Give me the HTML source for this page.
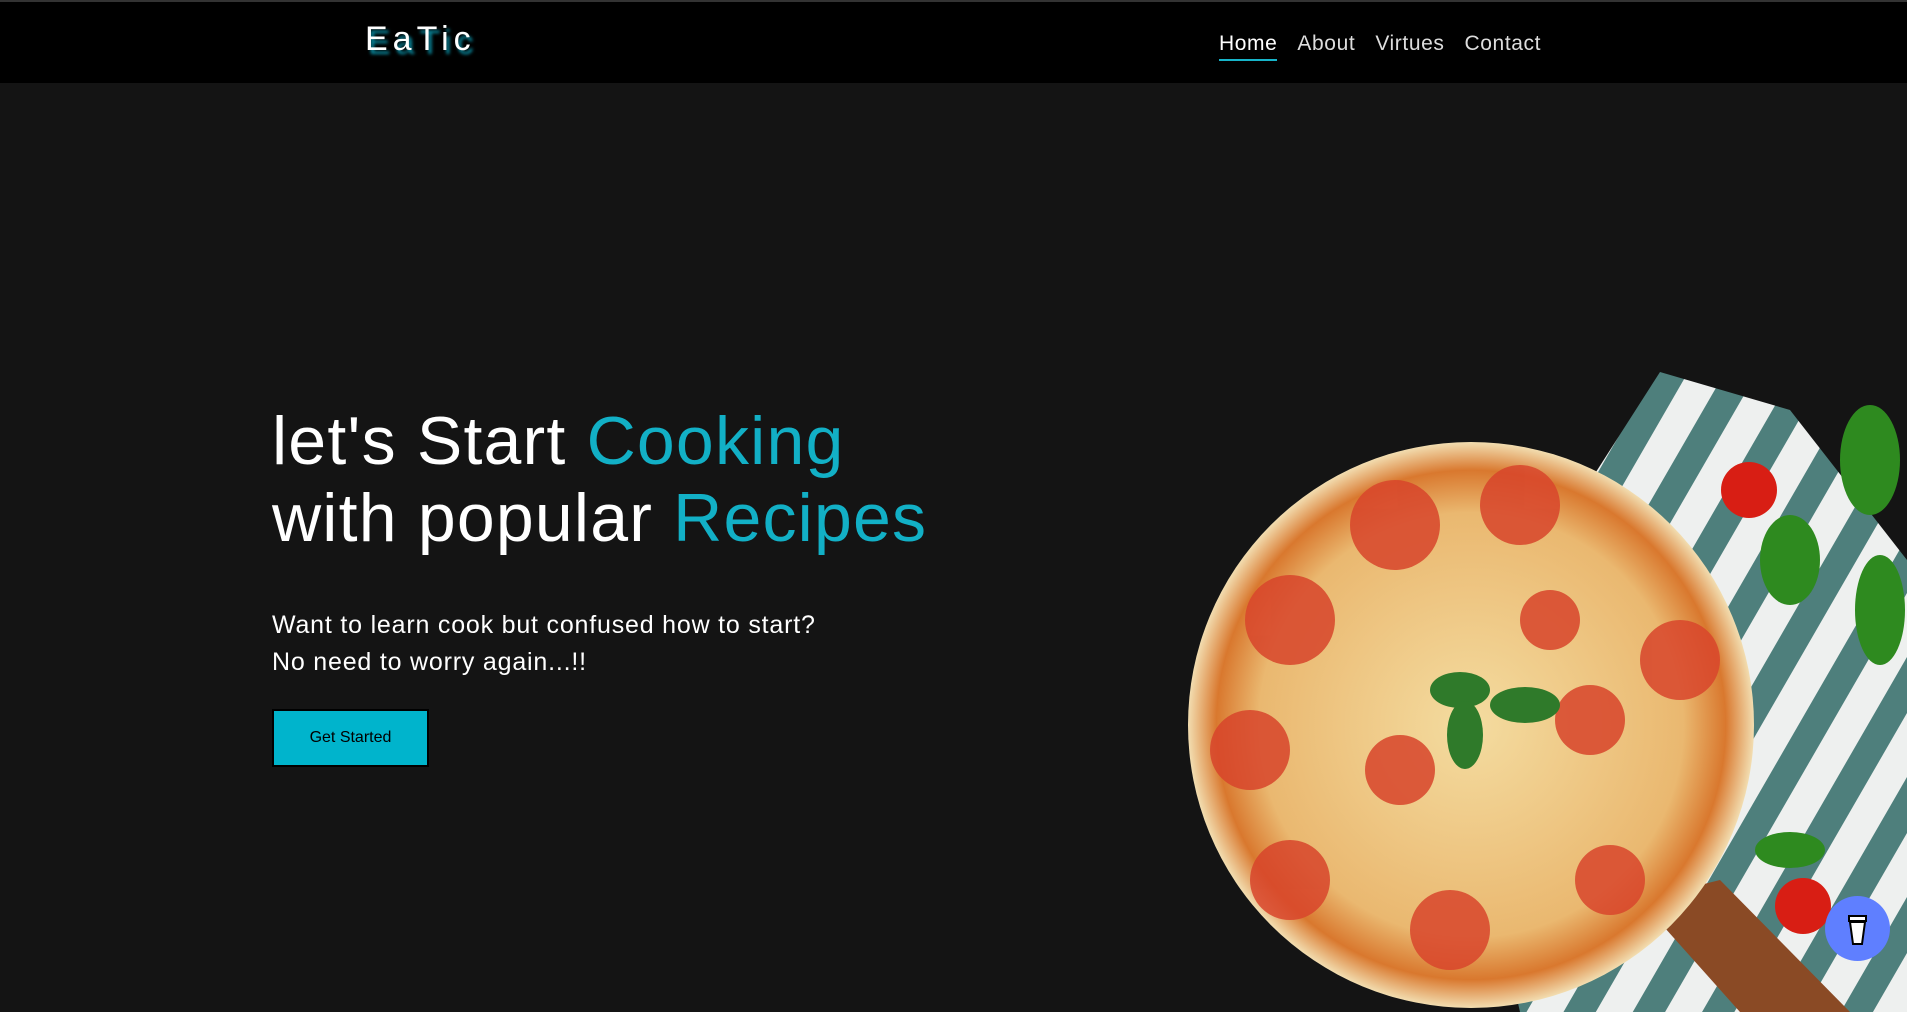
<!DOCTYPE html>
<html><head><meta charset="utf-8"><style>
*{margin:0;padding:0;box-sizing:border-box}
body{width:1907px;height:1012px;overflow:hidden;background:#141414;font-family:"Liberation Sans",sans-serif;position:relative}
.nav{position:absolute;left:0;top:0;width:1907px;height:83px;background:#000;border-top:2px solid #333}
.logo{position:absolute;left:365px;top:18px;font-size:34px;color:#fff;letter-spacing:5px;text-shadow:3px 4px 3px #0a8fa5}
.links{position:absolute;top:30px;left:1219px;font-size:21px;color:#ddd;letter-spacing:0.6px}
.links span{margin-right:20px}
.links .a{color:#fff;border-bottom:2px solid #17b4c9;padding-bottom:4px}
h1{position:absolute;left:272px;top:403px;font-weight:normal;font-size:68px;line-height:77px;color:#fff;letter-spacing:1.2px}
h1 b{font-weight:normal;color:#12b0c6}
p{position:absolute;left:272px;top:607px;font-size:25px;line-height:37px;color:#fff;letter-spacing:0.8px}
.btn{position:absolute;left:272px;top:709px;width:157px;height:58px;background:#00b4cc;border:2px solid #000;color:#000;font-size:16px;text-align:center;line-height:54px}
.cup{position:absolute;left:1825px;top:896px;width:65px;height:65px;border-radius:50%;background:#5f7fff}
</style></head><body>
<div class="nav"><div class="logo">EaTic</div>
<div class="links"><span class="a">Home</span><span>About</span><span>Virtues</span><span>Contact</span></div></div>
<h1>let's Start <b>Cooking</b><br>with popular <b>Recipes</b></h1>
<p>Want to learn cook but confused how to start?<br>No need to worry again...!!</p>
<div class="btn">Get Started</div>
<svg style="position:absolute;left:0;top:0" width="1907" height="1012">
<defs><pattern id="st" width="60" height="60" patternUnits="userSpaceOnUse" patternTransform="rotate(30)"><rect width="60" height="60" fill="#eef0ef"/><rect width="28" height="60" fill="#4e7f7c"/></pattern>
<radialGradient id="pz" cx="50%" cy="50%" r="50%"><stop offset="0" stop-color="#f4dca0"/><stop offset=".75" stop-color="#eab870"/><stop offset=".9" stop-color="#d9782e"/><stop offset="1" stop-color="#f2ddb0"/></radialGradient></defs>
<polygon points="1660,372 1790,410 1907,560 1907,1012 1520,1012 1450,700" fill="url(#st)"/>
<path d="M1640,900 L1720,880 L1850,1012 L1740,1012 Z" fill="#8a4a25"/>
<circle cx="1471" cy="725" r="283" fill="url(#pz)"/>
<g fill="#d8452b" opacity=".85"><circle cx="1395" cy="525" r="45"/><circle cx="1520" cy="505" r="40"/><circle cx="1290" cy="620" r="45"/><circle cx="1680" cy="660" r="40"/><circle cx="1250" cy="750" r="40"/><circle cx="1400" cy="770" r="35"/><circle cx="1590" cy="720" r="35"/><circle cx="1290" cy="880" r="40"/><circle cx="1450" cy="930" r="40"/><circle cx="1610" cy="880" r="35"/><circle cx="1550" cy="620" r="30"/></g>
<g fill="#2f7a2a"><ellipse cx="1460" cy="690" rx="30" ry="18"/><ellipse cx="1525" cy="705" rx="35" ry="18"/><ellipse cx="1465" cy="735" rx="18" ry="34"/></g>
<circle cx="1749" cy="490" r="28" fill="#d81e14"/><circle cx="1803" cy="906" r="28" fill="#d81e14"/>
<g fill="#2e8a1f"><ellipse cx="1790" cy="560" rx="30" ry="45"/><ellipse cx="1870" cy="460" rx="30" ry="55"/><ellipse cx="1880" cy="610" rx="25" ry="55"/><ellipse cx="1790" cy="850" rx="35" ry="18"/></g>
</svg>
<div class="cup"><svg width="65" height="65"><path d="M24 20h17v5H24z M25 26h15l-3 22h-9z" fill="#fff" stroke="#000" stroke-width="2"/></svg></div>
</body></html>
